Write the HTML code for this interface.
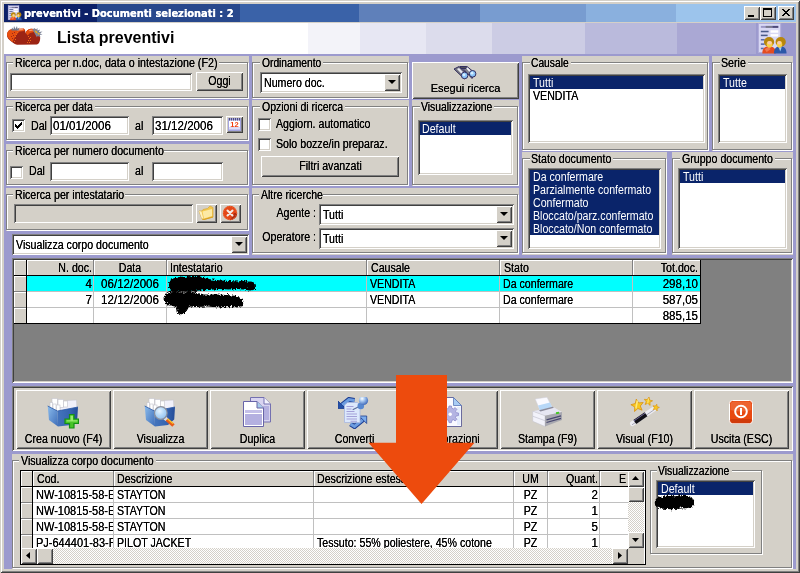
<!DOCTYPE html>
<html lang="it">
<head>
<meta charset="utf-8">
<title>preventivi - Documenti selezionati : 2</title>
<style>
html,body{margin:0;padding:0;}
body{width:800px;height:573px;overflow:hidden;background:#d4d0c8;position:relative;
 font-family:"Liberation Sans",sans-serif;font-size:12.5px;color:#000;line-height:14px;}
*{box-sizing:border-box;}
.a{position:absolute;}
.t{text-shadow:0 0 0 currentColor;position:absolute;white-space:nowrap;line-height:14px;height:14px;transform:scaleX(.85);transform-origin:0 0;}
.t.r{transform-origin:100% 0;text-align:right;}
.t.c{transform-origin:50% 0;text-align:center;}
.t.n{transform:scaleX(.925);}
.w{color:#fff;}
.t.w{text-shadow:none;}
#frame{left:0;top:0;width:800px;height:573px;background:#d4d0c8;
 box-shadow:inset 1px 1px 0 #d4d0c8,inset -1px -1px 0 #404040,inset 2px 2px 0 #fff,inset -2px -2px 0 #808080;}
#client{left:4px;top:22px;width:792px;height:547px;background:#9c9ace;}
.p{position:absolute;background:#d4d0c8;}
.gb{position:absolute;border:1px solid #808080;box-shadow:1px 1px 0 #fff,inset 1px 1px 0 #fff;}
.gl{position:absolute;background:#d4d0c8;height:13px;}
.s{position:absolute;background:#fff;
 box-shadow:inset 1px 1px 0 #808080,inset -1px -1px 0 #fff,inset 2px 2px 0 #404040,inset -2px -2px 0 #d4d0c8;}
.s.g{background:#d4d0c8;}
.b{position:absolute;background:#d4d0c8;
 box-shadow:inset 1px 1px 0 #fff,inset -1px -1px 0 #404040,inset 2px 2px 0 #d4d0c8,inset -2px -2px 0 #808080;}
.sel{position:absolute;background:#0a246a;}
.arr{position:absolute;width:0;height:0;border-left:4px solid transparent;border-right:4px solid transparent;border-top:4px solid #000;}
.hc{position:absolute;background:#d4d0c8;box-shadow:inset 1px 1px 0 #fff,inset -1px -1px 0 #404040;}
.cell{position:absolute;background:#fff;}
</style>
</head>
<body>
<div id="root" style="position:absolute;left:0;top:0;width:800px;height:573px;opacity:.999">
<div id="frame" class="a"></div>
<div class="a" style="left:4px;top:4px;width:792px;height:18px;background:#0c2068"></div>
<div class="a" style="left:97px;top:4px;width:143px;height:18px;background:#28488c"></div>
<div class="a" style="left:240px;top:4px;width:119px;height:18px;background:#3a62a8"></div>
<div class="a" style="left:359px;top:4px;width:121px;height:18px;background:#5f80ba"></div>
<div class="a" style="left:480px;top:4px;width:106px;height:18px;background:#789cd0"></div>
<div class="a" style="left:586px;top:4px;width:90px;height:18px;background:#8ab0de"></div>
<div class="a" style="left:676px;top:4px;width:120px;height:18px;background:#9cc4ec"></div>
<div class="a w" style="left:24px;top:7px;text-shadow:0 0 0 #fff;white-space:nowrap;font:bold 11px/13px 'DejaVu Sans Condensed','DejaVu Sans',sans-serif">preventivi - Documenti selezionati : 2</div>
<div id="client" class="a"></div>
<div class="a" style="left:4px;top:22px;width:792px;height:1px;background:#d4d0c8"></div>
<div class="a" style="left:4px;top:23px;width:752px;height:31px;background:#fff"></div>
<div class="a" style="left:308px;top:23px;width:52px;height:31px;background:#f3f3f9"></div>
<div class="a" style="left:360px;top:23px;width:66px;height:31px;background:#e7e7f3"></div>
<div class="a" style="left:426px;top:23px;width:66px;height:31px;background:#dcdcec"></div>
<div class="a" style="left:492px;top:23px;width:93px;height:31px;background:#cccce4"></div>
<div class="a" style="left:585px;top:23px;width:92px;height:31px;background:#babadc"></div>
<div class="a" style="left:677px;top:23px;width:79px;height:31px;background:#aaa8d4"></div>
<div class="a" style="left:57px;top:29px;white-space:nowrap;font:bold 16px/18px 'Liberation Sans',sans-serif">Lista preventivi</div>
<div class="p" style="left:6px;top:56px;width:243px;height:43px"></div>
<div class="gb" style="left:6px;top:62px;width:242px;height:36px"></div>
<div class="gl" style="left:13px;top:56px;width:206px"></div>
<div class="t " style="left:15px;top:56px;transform:scaleX(0.857);">Ricerca per n.doc, data o intestazione (F2)</div>
<div class="s " style="left:10px;top:73px;width:182px;height:18px"></div>
<div class="b"  style="left:196px;top:72px;width:47px;height:19px"></div>
<div class="t c" style="left:196px;top:74px;width:47px;">O<u>g</u>gi</div>
<div class="p" style="left:6px;top:100px;width:243px;height:41px"></div>
<div class="gb" style="left:6px;top:106px;width:242px;height:34px"></div>
<div class="gl" style="left:13px;top:100px;width:82px"></div>
<div class="t " style="left:15px;top:100px;">Ricerca per data</div>
<div class="s" style="left:12px;top:119px;width:13px;height:13px"><svg class="a" style="left:3px;top:3px" width="7" height="7" viewBox="0 0 7 7"><path d="M0 2v3l2 2l5-5v-3l-5 5z" fill="#000" shape-rendering="crispEdges"/></svg></div>
<div class="t " style="left:31px;top:119px;">Dal</div>
<div class="s " style="left:50px;top:116px;width:79px;height:19px"></div>
<div class="t n" style="left:53px;top:119px;">01/01/2006</div>
<div class="t " style="left:135px;top:119px;">al</div>
<div class="s " style="left:152px;top:116px;width:71px;height:19px"></div>
<div class="t n" style="left:155px;top:119px;">31/12/2006</div>
<div class="b" id=calbtn style="left:226px;top:116px;width:17px;height:17px"></div>
<div class="p" style="left:6px;top:144px;width:243px;height:42px"></div>
<div class="gb" style="left:6px;top:150px;width:242px;height:35px"></div>
<div class="gl" style="left:13px;top:144px;width:151px"></div>
<div class="t " style="left:15px;top:144px;">Ricerca per numero documento</div>
<div class="s" style="left:10px;top:166px;width:13px;height:13px"></div>
<div class="t " style="left:29px;top:164px;">Dal</div>
<div class="s " style="left:50px;top:162px;width:79px;height:19px"></div>
<div class="t " style="left:135px;top:164px;">al</div>
<div class="s " style="left:152px;top:162px;width:71px;height:19px"></div>
<div class="p" style="left:6px;top:188px;width:243px;height:43px"></div>
<div class="gb" style="left:6px;top:194px;width:242px;height:36px"></div>
<div class="gl" style="left:13px;top:188px;width:112px"></div>
<div class="t " style="left:15px;top:188px;">Ricerca per intestatario</div>
<div class="s g" style="left:14px;top:204px;width:179px;height:19px"></div>
<div class="b" id=foldbtn style="left:196px;top:204px;width:21px;height:19px"></div>
<div class="b" id=delbtn style="left:220px;top:204px;width:21px;height:19px"></div>
<div class="s " style="left:12px;top:234px;width:237px;height:21px"></div>
<div class="t " style="left:16px;top:238px;">Visualizza corpo documento</div>
<div class="b"  style="left:231px;top:236px;width:16px;height:17px"><div class="arr" style="left:4px;top:6px"></div></div>
<div class="p" style="left:252px;top:56px;width:157px;height:43px"></div>
<div class="gb" style="left:252px;top:62px;width:156px;height:36px"></div>
<div class="gl" style="left:260px;top:56px;width:63px"></div>
<div class="t " style="left:262px;top:56px;transform:scaleX(0.82);">Ordinamento</div>
<div class="s " style="left:260px;top:72px;width:142px;height:21px"></div>
<div class="t " style="left:264px;top:76px;">Numero doc.</div>
<div class="b"  style="left:384px;top:74px;width:16px;height:17px"><div class="arr" style="left:4px;top:6px"></div></div>
<div class="p" style="left:252px;top:100px;width:157px;height:86px"></div>
<div class="gb" style="left:252px;top:106px;width:156px;height:79px"></div>
<div class="gl" style="left:260px;top:100px;width:85px"></div>
<div class="t " style="left:262px;top:100px;transform:scaleX(0.84);">Opzioni di ricerca</div>
<div class="s" style="left:258px;top:118px;width:13px;height:13px"></div>
<div class="t " style="left:276px;top:117px;">Aggiorn. automatico</div>
<div class="s" style="left:258px;top:138px;width:13px;height:13px"></div>
<div class="t " style="left:276px;top:137px;">Solo bozze/in preparaz.</div>
<div class="b"  style="left:261px;top:156px;width:138px;height:21px"></div>
<div class="t c" style="left:261px;top:159px;width:139px;">Filtri avanzati</div>
<div class="b" id=esegui style="left:412px;top:62px;width:107px;height:37px"></div>
<div class="a" style="left:412px;top:82px;width:107px;text-align:center;white-space:nowrap;text-shadow:0 0 0 #000;font:11px/13px 'Liberation Sans',sans-serif">Esegui ricerca</div>
<div class="p" style="left:412px;top:100px;width:107px;height:86px"></div>
<div class="gb" style="left:412px;top:106px;width:106px;height:79px"></div>
<div class="gl" style="left:420px;top:100px;width:74px"></div>
<div class="t " style="left:421px;top:100px;transform:scaleX(0.83);">Visualizzazione</div>
<div class="s " style="left:418px;top:120px;width:95px;height:55px"></div>
<div class="sel" style="left:420px;top:122px;width:91px;height:13px"></div>
<div class="t w" style="left:422px;top:122px;">Default</div>
<div class="p" style="left:252px;top:188px;width:267px;height:67px"></div>
<div class="gb" style="left:252px;top:194px;width:266px;height:59px"></div>
<div class="gl" style="left:259px;top:188px;width:64px"></div>
<div class="t " style="left:261px;top:188px;transform:scaleX(0.84);">Altre ricerche</div>
<div class="t r" style="left:236px;top:206px;width:80px;">Agente :</div>
<div class="s " style="left:319px;top:204px;width:195px;height:21px"></div>
<div class="t " style="left:323px;top:208px;">Tutti</div>
<div class="b"  style="left:496px;top:206px;width:16px;height:17px"><div class="arr" style="left:4px;top:6px"></div></div>
<div class="t r" style="left:236px;top:230px;width:80px;">Operatore :</div>
<div class="s " style="left:319px;top:228px;width:195px;height:21px"></div>
<div class="t " style="left:323px;top:232px;">Tutti</div>
<div class="b"  style="left:496px;top:230px;width:16px;height:17px"><div class="arr" style="left:4px;top:6px"></div></div>
<div class="p" style="left:522px;top:56px;width:187px;height:95px"></div>
<div class="gb" style="left:522px;top:62px;width:186px;height:88px"></div>
<div class="gl" style="left:530px;top:56px;width:41px"></div>
<div class="t " style="left:531px;top:56px;transform:scaleX(0.82);">Causale</div>
<div class="s " style="left:528px;top:74px;width:177px;height:69px"></div>
<div class="sel" style="left:530px;top:76px;width:173px;height:13px"></div>
<div class="t w" style="left:533px;top:76px;">Tutti</div>
<div class="t " style="left:533px;top:89px;">VENDITA</div>
<div class="p" style="left:712px;top:56px;width:81px;height:95px"></div>
<div class="gb" style="left:712px;top:62px;width:80px;height:88px"></div>
<div class="gl" style="left:720px;top:56px;width:28px"></div>
<div class="t " style="left:721px;top:56px;">Serie</div>
<div class="s " style="left:718px;top:74px;width:69px;height:69px"></div>
<div class="sel" style="left:720px;top:76px;width:65px;height:13px"></div>
<div class="t w" style="left:723px;top:76px;">Tutte</div>
<div class="p" style="left:522px;top:152px;width:145px;height:103px"></div>
<div class="gb" style="left:522px;top:158px;width:144px;height:95px"></div>
<div class="gl" style="left:530px;top:152px;width:83px"></div>
<div class="t " style="left:531px;top:152px;">Stato documento</div>
<div class="s " style="left:528px;top:168px;width:133px;height:81px"></div>
<div class="sel" style="left:530px;top:170px;width:129px;height:65px"></div>
<div class="t w" style="left:533px;top:170px;">Da confermare</div>
<div class="t w" style="left:533px;top:183px;">Parzialmente confermato</div>
<div class="t w" style="left:533px;top:196px;">Confermato</div>
<div class="t w" style="left:533px;top:209px;">Bloccato/parz.confermato</div>
<div class="t w" style="left:533px;top:222px;">Bloccato/Non confermato</div>
<div class="p" style="left:672px;top:152px;width:121px;height:103px"></div>
<div class="gb" style="left:672px;top:158px;width:120px;height:95px"></div>
<div class="gl" style="left:680px;top:152px;width:95px"></div>
<div class="t " style="left:682px;top:152px;">Gruppo documento</div>
<div class="s " style="left:678px;top:168px;width:109px;height:81px"></div>
<div class="sel" style="left:680px;top:170px;width:105px;height:13px"></div>
<div class="t w" style="left:683px;top:170px;">Tutti</div>
<div class="s" style="left:12px;top:258px;width:781px;height:125px;background:#808080"></div>
<div class="a" style="left:14px;top:260px;width:686px;height:15px;background:#d4d0c8"></div>
<div class="a" style="left:14px;top:260px;width:686px;height:1px;background:#fff"></div>
<div class="a" style="left:14px;top:276px;width:12px;height:47px;background:#d4d0c8"></div>
<div class="a" style="left:27px;top:276px;width:673px;height:15px;background:#00ffff"></div>
<div class="a" style="left:27px;top:292px;width:673px;height:31px;background:#fff"></div>
<div class="a" style="left:27px;top:291px;width:673px;height:1px;background:#c0c0c0"></div>
<div class="a" style="left:27px;top:307px;width:673px;height:1px;background:#c0c0c0"></div>
<div class="a" style="left:93px;top:276px;width:1px;height:47px;background:#c0c0c0"></div>
<div class="a" style="left:93px;top:260px;width:1px;height:15px;background:#808080"></div>
<div class="a" style="left:94px;top:261px;width:1px;height:14px;background:#fff"></div>
<div class="a" style="left:166px;top:276px;width:1px;height:47px;background:#c0c0c0"></div>
<div class="a" style="left:166px;top:260px;width:1px;height:15px;background:#808080"></div>
<div class="a" style="left:167px;top:261px;width:1px;height:14px;background:#fff"></div>
<div class="a" style="left:366px;top:276px;width:1px;height:47px;background:#c0c0c0"></div>
<div class="a" style="left:366px;top:260px;width:1px;height:15px;background:#808080"></div>
<div class="a" style="left:367px;top:261px;width:1px;height:14px;background:#fff"></div>
<div class="a" style="left:499px;top:276px;width:1px;height:47px;background:#c0c0c0"></div>
<div class="a" style="left:499px;top:260px;width:1px;height:15px;background:#808080"></div>
<div class="a" style="left:500px;top:261px;width:1px;height:14px;background:#fff"></div>
<div class="a" style="left:632px;top:276px;width:1px;height:47px;background:#c0c0c0"></div>
<div class="a" style="left:632px;top:260px;width:1px;height:15px;background:#808080"></div>
<div class="a" style="left:633px;top:261px;width:1px;height:14px;background:#fff"></div>
<div class="a" style="left:14px;top:261px;width:1px;height:14px;background:#fff"></div>
<div class="a" style="left:27px;top:261px;width:1px;height:14px;background:#fff"></div>
<div class="a" style="left:14px;top:276px;width:12px;height:1px;background:#fff"></div>
<div class="a" style="left:14px;top:276px;width:1px;height:15px;background:#fff"></div>
<div class="a" style="left:14px;top:292px;width:12px;height:1px;background:#fff"></div>
<div class="a" style="left:14px;top:292px;width:1px;height:15px;background:#fff"></div>
<div class="a" style="left:14px;top:308px;width:12px;height:1px;background:#fff"></div>
<div class="a" style="left:14px;top:308px;width:1px;height:15px;background:#fff"></div>
<div class="a" style="left:14px;top:291px;width:12px;height:1px;background:#808080"></div>
<div class="a" style="left:14px;top:307px;width:12px;height:1px;background:#808080"></div>
<div class="a" style="left:14px;top:275px;width:687px;height:1px;background:#000"></div>
<div class="a" style="left:14px;top:323px;width:687px;height:1px;background:#000"></div>
<div class="a" style="left:26px;top:260px;width:1px;height:64px;background:#000"></div>
<div class="a" style="left:700px;top:260px;width:1px;height:64px;background:#000"></div>
<div class="t r" style="left:27px;top:261px;width:65px;">N. doc.</div>
<div class="t c" style="left:94px;top:261px;width:72px;">Data</div>
<div class="t " style="left:170px;top:261px;">Intestatario</div>
<div class="t " style="left:371px;top:261px;">Causale</div>
<div class="t " style="left:504px;top:261px;">Stato</div>
<div class="t r" style="left:633px;top:261px;width:65px;">Tot.doc.</div>
<div class="t r n" style="left:27px;top:277px;width:65px;">4</div>
<div class="t c n" style="left:94px;top:277px;width:72px;">06/12/2006</div>
<div class="t " style="left:370px;top:277px;">VENDITA</div>
<div class="t " style="left:503px;top:277px;">Da confermare</div>
<div class="t r n" style="left:633px;top:277px;width:65px;">298,10</div>
<div class="t r n" style="left:27px;top:293px;width:65px;">7</div>
<div class="t c n" style="left:94px;top:293px;width:72px;">12/12/2006</div>
<div class="t " style="left:370px;top:293px;">VENDITA</div>
<div class="t " style="left:503px;top:293px;">Da confermare</div>
<div class="t r n" style="left:633px;top:293px;width:65px;">587,05</div>
<div class="t r n" style="left:633px;top:309px;width:65px;">885,15</div>
<div class="s" style="left:12px;top:386px;width:781px;height:65px;background:#d4d0c8"></div>
<div class="b" id=tb0 style="left:16px;top:390px;width:95px;height:59px"></div>
<div class="t c" style="left:16px;top:432px;width:95px;">Crea nuovo (F4)</div>
<div class="b" id=tb1 style="left:113px;top:390px;width:95px;height:59px"></div>
<div class="t c" style="left:113px;top:432px;width:95px;">Visualizza</div>
<div class="b" id=tb2 style="left:210px;top:390px;width:95px;height:59px"></div>
<div class="t c" style="left:210px;top:432px;width:95px;">Duplica</div>
<div class="b" id=tb3 style="left:307px;top:390px;width:95px;height:59px"></div>
<div class="t c" style="left:307px;top:432px;width:95px;">Converti</div>
<div class="b" id=tb4 style="left:403px;top:390px;width:95px;height:59px"></div>
<div class="t c" style="left:403px;top:432px;width:95px;">Elaborazioni</div>
<div class="b" id=tb5 style="left:500px;top:390px;width:95px;height:59px"></div>
<div class="t c" style="left:500px;top:432px;width:95px;">Stampa (F9)</div>
<div class="b" id=tb6 style="left:597px;top:390px;width:95px;height:59px"></div>
<div class="t c" style="left:597px;top:432px;width:95px;">Visual (F10)</div>
<div class="b" id=tb7 style="left:694px;top:390px;width:95px;height:59px"></div>
<div class="t c" style="left:694px;top:432px;width:95px;">Uscita (ESC)</div>
<div class="p" style="left:12px;top:454px;width:781px;height:115px"></div>
<div class="gb" style="left:12px;top:460px;width:780px;height:108px"></div>
<div class="gl" style="left:19px;top:454px;width:137px"></div>
<div class="t " style="left:21px;top:454px;">Visualizza corpo documento</div>
<div class="a" style="left:-1px;top:-1px;width:0;height:0">
<div class="a" style="left:21px;top:471px;width:626px;height:95px;background:#fff;border:1px solid #000"></div>
<div class="a" style="left:22px;top:472px;width:607px;height:15px;background:#d4d0c8"></div>
<div class="a" style="left:22px;top:472px;width:607px;height:1px;background:#fff"></div>
<div class="a" style="left:22px;top:488px;width:11px;height:61px;background:#d4d0c8"></div>
<div class="a" style="left:34px;top:503px;width:595px;height:1px;background:#c0c0c0"></div>
<div class="a" style="left:34px;top:519px;width:595px;height:1px;background:#c0c0c0"></div>
<div class="a" style="left:34px;top:535px;width:595px;height:1px;background:#c0c0c0"></div>
<div class="a" style="left:114px;top:488px;width:1px;height:61px;background:#c0c0c0"></div>
<div class="a" style="left:114px;top:472px;width:1px;height:15px;background:#808080"></div>
<div class="a" style="left:115px;top:473px;width:1px;height:14px;background:#fff"></div>
<div class="a" style="left:314px;top:488px;width:1px;height:61px;background:#c0c0c0"></div>
<div class="a" style="left:314px;top:472px;width:1px;height:15px;background:#808080"></div>
<div class="a" style="left:315px;top:473px;width:1px;height:14px;background:#fff"></div>
<div class="a" style="left:514px;top:488px;width:1px;height:61px;background:#c0c0c0"></div>
<div class="a" style="left:514px;top:472px;width:1px;height:15px;background:#808080"></div>
<div class="a" style="left:515px;top:473px;width:1px;height:14px;background:#fff"></div>
<div class="a" style="left:548px;top:488px;width:1px;height:61px;background:#c0c0c0"></div>
<div class="a" style="left:548px;top:472px;width:1px;height:15px;background:#808080"></div>
<div class="a" style="left:549px;top:473px;width:1px;height:14px;background:#fff"></div>
<div class="a" style="left:600px;top:488px;width:1px;height:61px;background:#c0c0c0"></div>
<div class="a" style="left:600px;top:472px;width:1px;height:15px;background:#808080"></div>
<div class="a" style="left:601px;top:473px;width:1px;height:14px;background:#fff"></div>
<div class="a" style="left:22px;top:473px;width:1px;height:14px;background:#fff"></div>
<div class="a" style="left:34px;top:473px;width:1px;height:14px;background:#fff"></div>
<div class="a" style="left:22px;top:488px;width:11px;height:1px;background:#fff"></div>
<div class="a" style="left:22px;top:488px;width:1px;height:15px;background:#fff"></div>
<div class="a" style="left:22px;top:504px;width:11px;height:1px;background:#fff"></div>
<div class="a" style="left:22px;top:504px;width:1px;height:15px;background:#fff"></div>
<div class="a" style="left:22px;top:520px;width:11px;height:1px;background:#fff"></div>
<div class="a" style="left:22px;top:520px;width:1px;height:15px;background:#fff"></div>
<div class="a" style="left:22px;top:536px;width:11px;height:1px;background:#fff"></div>
<div class="a" style="left:22px;top:536px;width:1px;height:13px;background:#fff"></div>
<div class="a" style="left:22px;top:503px;width:11px;height:1px;background:#808080"></div>
<div class="a" style="left:22px;top:519px;width:11px;height:1px;background:#808080"></div>
<div class="a" style="left:22px;top:535px;width:11px;height:1px;background:#808080"></div>
<div class="a" style="left:22px;top:487px;width:607px;height:1px;background:#000"></div>
<div class="a" style="left:33px;top:472px;width:1px;height:77px;background:#000"></div>
<div class="t " style="left:38px;top:473px;">Cod.</div>
<div class="t " style="left:118px;top:473px;">Descrizione</div>
<div class="t " style="left:318px;top:473px;">Descrizione estesa</div>
<div class="t c" style="left:515px;top:473px;width:33px;">UM</div>
<div class="t r" style="left:549px;top:473px;width:50px;">Quant.</div>
<div class="t r" style="left:601px;top:473px;width:26px;">E</div>
<div class="a" style="left:34px;top:489px;width:595px;height:14px;overflow:hidden">
<div class="a" style="left:0;top:0;width:80px;height:14px;overflow:hidden"><div class="t" style="left:3px;top:0;transform:scaleX(.88)">NW-10815-58-E</div></div>
<div class="t" style="left:84px;top:0">STAYTON</div>
<div class="t c" style="left:481px;top:0;width:33px">PZ</div>
<div class="t r n" style="left:515px;top:0;width:50px">2</div>
</div>
<div class="a" style="left:34px;top:505px;width:595px;height:14px;overflow:hidden">
<div class="a" style="left:0;top:0;width:80px;height:14px;overflow:hidden"><div class="t" style="left:3px;top:0;transform:scaleX(.88)">NW-10815-58-E</div></div>
<div class="t" style="left:84px;top:0">STAYTON</div>
<div class="t c" style="left:481px;top:0;width:33px">PZ</div>
<div class="t r n" style="left:515px;top:0;width:50px">1</div>
</div>
<div class="a" style="left:34px;top:521px;width:595px;height:14px;overflow:hidden">
<div class="a" style="left:0;top:0;width:80px;height:14px;overflow:hidden"><div class="t" style="left:3px;top:0;transform:scaleX(.88)">NW-10815-58-E</div></div>
<div class="t" style="left:84px;top:0">STAYTON</div>
<div class="t c" style="left:481px;top:0;width:33px">PZ</div>
<div class="t r n" style="left:515px;top:0;width:50px">5</div>
</div>
<div class="a" style="left:34px;top:537px;width:595px;height:12px;overflow:hidden">
<div class="a" style="left:0;top:0;width:80px;height:12px;overflow:hidden"><div class="t" style="left:3px;top:0;transform:scaleX(.88)">PJ-644401-83-F</div></div>
<div class="t" style="left:84px;top:0">PILOT JACKET</div>
<div class="t" style="left:284px;top:0">Tessuto: 55% poliestere, 45% cotone</div>
<div class="t c" style="left:481px;top:0;width:33px">PZ</div>
<div class="t r n" style="left:515px;top:0;width:50px">1</div>
</div>
<div class="a" style="left:22px;top:549px;width:607px;height:16px;background-color:#fff;background-image:linear-gradient(45deg,#d4d0c8 25%,transparent 25%,transparent 75%,#d4d0c8 75%),linear-gradient(45deg,#d4d0c8 25%,transparent 25%,transparent 75%,#d4d0c8 75%);background-size:2px 2px;background-position:0 0,1px 1px;"></div>
<div class="a" style="left:629px;top:472px;width:16px;height:77px;background-color:#fff;background-image:linear-gradient(45deg,#d4d0c8 25%,transparent 25%,transparent 75%,#d4d0c8 75%),linear-gradient(45deg,#d4d0c8 25%,transparent 25%,transparent 75%,#d4d0c8 75%);background-size:2px 2px;background-position:0 0,1px 1px;"></div>
<div class="a" style="left:629px;top:549px;width:16px;height:16px;background:#d4d0c8"></div>
<div class="b"  style="left:22px;top:549px;width:16px;height:16px"><svg class="a" style="left:5px;top:4px" width="4" height="7"><path d="M4 0v7l-4-3.5z" fill="#000"/></svg></div>
<div class="b"  style="left:38px;top:549px;width:16px;height:16px"></div>
<div class="b"  style="left:613px;top:549px;width:16px;height:16px"><svg class="a" style="left:6px;top:4px" width="4" height="7"><path d="M0 0v7l4-3.5z" fill="#000"/></svg></div>
<div class="b"  style="left:629px;top:472px;width:16px;height:16px"><svg class="a" style="left:4px;top:5px" width="7" height="4"><path d="M0 4h7l-3.5-4z" fill="#000"/></svg></div>
<div class="b"  style="left:629px;top:488px;width:16px;height:15px"></div>
<div class="b"  style="left:629px;top:533px;width:16px;height:16px"><svg class="a" style="left:4px;top:6px" width="7" height="4"><path d="M0 0h7l-3.5 4z" fill="#000"/></svg></div>
</div>
<div class="gb" style="left:650px;top:470px;width:112px;height:84px"></div>
<div class="gl" style="left:657px;top:464px;width:75px"></div>
<div class="t " style="left:658px;top:464px;transform:scaleX(0.83);">Visualizzazione</div>
<div class="s " style="left:656px;top:480px;width:99px;height:68px"></div>
<div class="sel" style="left:658px;top:482px;width:95px;height:13px"></div>
<div class="t w" style="left:661px;top:482px;">Default</div>
<div class="b"  style="left:744px;top:6px;width:16px;height:14px"><svg class="a" style="left:0;top:0" width="16" height="14"><rect x="4" y="9" width="6" height="2" fill="#000"/></svg></div>
<div class="b"  style="left:760px;top:6px;width:16px;height:14px"><svg class="a" style="left:0;top:0" width="16" height="14"><rect x="3.5" y="2.5" width="8" height="8" fill="none" stroke="#000"/><rect x="3" y="2" width="9" height="2" fill="#000"/></svg></div>
<div class="b"  style="left:778px;top:6px;width:16px;height:14px"><svg class="a" style="left:0;top:0" width="16" height="14"><path d="M4 3l7 7M5 3l7 7M11 3l-7 7M12 3l-7 7" stroke="#000" stroke-width="1" fill="none" shape-rendering="crispEdges"/></svg></div>
<svg class="a" style="left:7px;top:5px" width="15" height="16" viewBox="0 0 32 32"><rect x="2.500" y=".5" width="23" height="30" fill="#d8d8f4" stroke="#b0acd8"/><rect x="5" y="3" width="18" height="2" fill="#9a96c4"/><rect x="10" y="3" width="7" height="2" fill="#78788c"/><rect x="17" y="3" width="6" height="2" fill="#4e4a7a"/><rect x="5" y="8" width="8" height="1.600" fill="#4a5a8a"/><rect x="15" y="7.500" width="8" height="2.500" fill="#fff"/><rect x="5" y="12" width="7" height="1.600" fill="#4a5a8a"/><rect x="15" y="11.500" width="8" height="2.500" fill="#fff"/><rect x="5" y="16.500" width="4" height="1.600" fill="#5a6aaa"/><rect x="5" y="21" width="4" height="1.600" fill="#5a6aaa"/><rect x="5" y="25.500" width="3" height="1.600" fill="#5a6aaa"/><path d="M6.500 31.500c0-5 2.500-7.500 7-7.500s7 2.500 7 7.500z" fill="#e44c20"/><path d="M9 27l4-2.500 2 2.500-4 3z" fill="#f07850"/><ellipse cx="13.500" cy="19.500" rx="5.300" ry="5" fill="#b8860c"/><ellipse cx="14" cy="22" rx="3" ry="3.500" fill="#f8d048"/><ellipse cx="14" cy="20.500" rx="2.300" ry="1.800" fill="#f8c8b0"/><path d="M18.500 31.500c0-5 2.500-7.500 6.500-7.500s6.500 2.500 6.500 7.500z" fill="#2c58a8"/><path d="M23.500 25l1.500 4.500 1.500-4.500z" fill="#a8d0f0"/><ellipse cx="25.500" cy="19.500" rx="5.300" ry="5" fill="#b8860c"/><ellipse cx="24.300" cy="22" rx="2.800" ry="3.500" fill="#f8d048"/><ellipse cx="24" cy="20.500" rx="2" ry="1.800" fill="#f8c8b0"/></svg>
<svg class="a" style="left:756px;top:23px" width="31" height="31" viewBox="0 0 32 32"><rect x="2.500" y=".5" width="23" height="30" fill="#d8d8f4" stroke="#b0acd8"/><rect x="5" y="3" width="18" height="2" fill="#9a96c4"/><rect x="10" y="3" width="7" height="2" fill="#78788c"/><rect x="17" y="3" width="6" height="2" fill="#4e4a7a"/><rect x="5" y="8" width="8" height="1.600" fill="#4a5a8a"/><rect x="15" y="7.500" width="8" height="2.500" fill="#fff"/><rect x="5" y="12" width="7" height="1.600" fill="#4a5a8a"/><rect x="15" y="11.500" width="8" height="2.500" fill="#fff"/><rect x="5" y="16.500" width="4" height="1.600" fill="#5a6aaa"/><rect x="5" y="21" width="4" height="1.600" fill="#5a6aaa"/><rect x="5" y="25.500" width="3" height="1.600" fill="#5a6aaa"/><path d="M6.500 31.500c0-5 2.500-7.500 7-7.500s7 2.500 7 7.500z" fill="#e44c20"/><path d="M9 27l4-2.500 2 2.500-4 3z" fill="#f07850"/><ellipse cx="13.500" cy="19.500" rx="5.300" ry="5" fill="#b8860c"/><ellipse cx="14" cy="22" rx="3" ry="3.500" fill="#f8d048"/><ellipse cx="14" cy="20.500" rx="2.300" ry="1.800" fill="#f8c8b0"/><path d="M18.500 31.500c0-5 2.500-7.500 6.500-7.500s6.500 2.500 6.500 7.500z" fill="#2c58a8"/><path d="M23.500 25l1.500 4.500 1.500-4.500z" fill="#a8d0f0"/><ellipse cx="25.500" cy="19.500" rx="5.300" ry="5" fill="#b8860c"/><ellipse cx="24.300" cy="22" rx="2.800" ry="3.500" fill="#f8d048"/><ellipse cx="24" cy="20.500" rx="2" ry="1.800" fill="#f8c8b0"/></svg>
<svg class="a" style="left:4px;top:23px" width="44" height="26" viewBox="0 0 44 26"><g transform="translate(-4,-23)"><path d="M7 35C7 31.500 9 29.500 12 29.200L24 28.800C25.500 30 25.500 32 25.300 33.500C26 31 28 29 31 28.700L35 29C38 30.500 40.200 34 40.200 38C40.200 41 39 44 37 44.600L17 44.800C14 44 11 41.500 9 39.500C7.500 38 7 36.500 7 35Z" fill="#9c2414"/><path d="M7 35C7 31.500 9 29.500 12 29.200L24 28.600L24.500 31L19.500 31.500L16 35L14 39L12.500 42C10.500 40.500 8 38.500 7 35Z" fill="#e8500f"/><path d="M16 29l6-.5 1.500 1.500-6 .8z" fill="#f89870"/><path d="M25.800 33C26.500 30.500 28.500 29 31 28.700L35 29.200L34 32L30 33L27.500 35.500Z" fill="#e8500f"/><path d="M29 30l3.500-.5.500 1-3.500.8z" fill="#f89870"/><path d="M11.500 30.500l.5-3 1.500 2 .5-3.500 1.500 3 1.500-3 .5 3 2-1.500-1 3z" fill="#70788c"/><path d="M32.500 29.500l2.500-1.500.5 2 2-2 0 2.500 2.500-1-1 2.500 3.500-.5-2.500 2 2.500 1-3 .5 1 2-3-1-.5 1.500-2-3.500z" fill="#7c8498"/><path d="M34.500 30.500l2 .5 1.500 2.500-2-.5z" fill="#e8b020"/><rect x="38" y="33" width="1.500" height="1.500" fill="#e8b020"/><g fill="#a02818"><rect x="12" y="33" width="1" height="1"/><rect x="13" y="35" width="1" height="1"/><rect x="11" y="36" width="1" height="1"/><rect x="14" y="32" width="1" height="1"/><rect x="12" y="38" width="1" height="1"/></g><g fill="#f06818"><rect x="15" y="36" width="1" height="1"/><rect x="16" y="34" width="1" height="1"/><rect x="17" y="32" width="1" height="1"/><rect x="15" y="39" width="1" height="1"/><rect x="14" y="41" width="1" height="1"/><rect x="28" y="36" width="1" height="1"/><rect x="29" y="38" width="1" height="1"/><rect x="30" y="40" width="1" height="1"/><rect x="28" y="40" width="1" height="1"/><rect x="30" y="37" width="1" height="1"/><rect x="27" y="42" width="1" height="1"/><rect x="29" y="42" width="1" height="1"/></g></g></svg>
<svg class="a" style="left:228px;top:118px" width="13" height="13" viewBox="0 0 13 13"><rect x="0" y="0" width="13" height="13" fill="#a4a4e0"/><rect x="1" y="2.5" width="11" height="7" fill="#fff"/><path d="M1.5 0v2.500M3.500 0v2.500M5.500 0v2.500M7.500 0v2.500M9.500 0v2.500M11.500 0v2.500" stroke="#505078" stroke-width="1"/><rect x="1" y="9.500" width="11" height="2" fill="#e0e0f8"/><text x="6.500" y="9" font-family="Liberation Sans,sans-serif" font-weight="bold" font-size="7.500" fill="#f04010" text-anchor="middle">12</text></svg>
<svg class="a" style="left:198px;top:205px" width="17" height="16" viewBox="0 0 17 16"><path d="M1 6l3 8 2 .5 9-2.500V2.500L12 1 9.500 3.500 5 4.500 4 6z" fill="#f4c84c" stroke="#d8a838" stroke-width=".7"/><path d="M4.500 6.500l9.500-2.500v7l-8 2.500z" fill="#fce9a4"/><path d="M1 6l3 8 1.500.3L3.500 6.500z" fill="#fdf0c0"/><path d="M4 14l2 .5 9-2.500" stroke="#d8a020" stroke-width="1" fill="none"/></svg>
<svg class="a" style="left:222px;top:205px" width="16" height="16" viewBox="0 0 16 16"><circle cx="8" cy="8" r="7.200" fill="#e44818"/><path d="M8 15.200a7.200 7.200 0 0 0 7.200-7.200h-3z" fill="#b02c10"/><circle cx="8" cy="8" r="6.500" fill="none" stroke="#f47848" stroke-width=".8" stroke-dasharray="1 1"/><path d="M5.500 5.500l5 5M10.500 5.500l-5 5" stroke="#f4ece8" stroke-width="2" stroke-linecap="round"/></svg>
<svg class="a" style="left:452px;top:64px" width="26" height="17" viewBox="0 0 26 17"><g stroke="#343060" stroke-width="1"><path d="M2 5l5-2.500 8 7.500-2.500 5z" fill="#74747f"/><path d="M10 3.500l5-1 8 6.500-3 5.500z" fill="#84848f"/><path d="M8 2.500h6l1 2h-6z" fill="#505058"/></g><path d="M5 5l2-1 6 6-1.500 2z" fill="#e8e8f0"/><path d="M14 4l1.500-.5 5.500 5-1.500 2z" fill="#f4f4f8"/><circle cx="12.600" cy="11.400" r="3.300" fill="#8cc4f8" stroke="#343060"/><circle cx="20.600" cy="9.800" r="3.300" fill="#8cc4f8" stroke="#343060"/><circle cx="12" cy="10.800" r="1.400" fill="#d8f0ff"/><circle cx="20" cy="9.200" r="1.400" fill="#d8f0ff"/></svg>
<svg width="0" height="0" style="position:absolute"><defs><linearGradient id="gL" x1="0" y1="0" x2="1" y2="1"><stop offset="0" stop-color="#8cbcec"/><stop offset="1" stop-color="#3c6cb8"/></linearGradient><linearGradient id="gF" x1="0" y1="0" x2="1" y2="0"><stop offset="0" stop-color="#4474bc"/><stop offset=".6" stop-color="#3564b0"/><stop offset="1" stop-color="#244c98"/></linearGradient><radialGradient id="gLens" cx=".4" cy=".35" r=".7"><stop offset="0" stop-color="#e8f4ff"/><stop offset=".5" stop-color="#b4d8f8"/><stop offset="1" stop-color="#90c0f0"/></radialGradient></defs></svg>
<svg class="a" style="left:47px;top:397px" width="32" height="32" viewBox="0 0 32 32"><g fill="#fff" stroke="#c4c4cc" stroke-width=".6"><path d="M20 3.500l9.500-.5 .5 9-17 2v-5h5z" fill="#f0f0fa"/><rect x="5" y="1.500" width="5.500" height="9"/><rect x="11" y="2.300" width="5.500" height="8"/><rect x="16.500" y="4" width="4" height="6"/><rect x="3" y="5.500" width="2.500" height="8"/><rect x="6" y="7" width="3" height="7"/><rect x="9.500" y="8" width="3.500" height="7"/></g><path d="M.7 9l9.800 5 .5 15.500-9-6.500z" fill="url(#gL)"/><path d="M10.500 14l20.500-4-.8 12.500-6.200 5.500-13 1.500z" fill="url(#gF)"/><path d="M.7 9l9.800 5 20.500-4" fill="none" stroke="#2c58a4" stroke-width=".8"/><path d="M22.500 17.500h4.500v4.500h4.500v4.500h-4.500v4.500h-4.500v-4.500h-4.500v-4.500h4.500z" fill="#48c428" stroke="#149014" stroke-width="1.200"/><path d="M23.500 18.700h2.500v4.500h4.500v1.200h-11v-1.200h4z" fill="#98ec70"/></svg>
<svg class="a" style="left:144px;top:397px" width="32" height="32" viewBox="0 0 32 32"><g fill="#fff" stroke="#c4c4cc" stroke-width=".6"><path d="M20 3.500l9.500-.5 .5 9-17 2v-5h5z" fill="#f0f0fa"/><rect x="5" y="1.500" width="5.500" height="9"/><rect x="11" y="2.300" width="5.500" height="8"/><rect x="16.500" y="4" width="4" height="6"/><rect x="3" y="5.500" width="2.500" height="8"/><rect x="6" y="7" width="3" height="7"/><rect x="9.500" y="8" width="3.500" height="7"/></g><path d="M.7 9l9.800 5 .5 15.500-9-6.500z" fill="url(#gL)"/><path d="M10.500 14l20.500-4-.8 12.500-6.200 5.500-13 1.500z" fill="url(#gF)"/><path d="M.7 9l9.800 5 20.500-4" fill="none" stroke="#2c58a4" stroke-width=".8"/><path d="M21.500 21.500l8 7" stroke="#e85c18" stroke-width="3.600"/><path d="M23.500 21.800l5.500 4.800" stroke="#f8c828" stroke-width="1.300"/><path d="M20.700 20.800l2 1.800" stroke="#d8dce4" stroke-width="3.800"/><circle cx="16.800" cy="16" r="6.300" fill="url(#gLens)" stroke="#8c909c" stroke-width="1.200"/></svg>
<svg class="a" style="left:241px;top:397px" width="32" height="32" viewBox="0 0 32 32"><path d="M9.500.5h13.500l6.500 6.500v18h-20z" fill="#d8d4f0" stroke="#7470b0"/><path d="M23 .5v6.500h6.500" fill="#f4f4ff" stroke="#7470b0"/><rect x="22" y="9" width="6" height="14" fill="#b4b0e0"/><path d="M2.500 4.500h13.500l6.500 6.500v18.500h-20z" fill="#fff" stroke="#6864a8"/><path d="M16 4.500v6.500h6.500" fill="#a8cce8" stroke="#6864a8"/><rect x="4" y="13" width="17" height="3" fill="#c4c0e8"/><rect x="4" y="17" width="17" height="11" fill="#b4b0e0"/></svg>
<svg width="0" height="0" style="position:absolute"><defs><radialGradient id="gPin" cx=".35" cy=".3" r=".8"><stop offset="0" stop-color="#fff"/><stop offset=".35" stop-color="#a8c8f0"/><stop offset="1" stop-color="#2c58b0"/></radialGradient></defs></svg>
<svg class="a" style="left:338px;top:397px" width="32" height="32" viewBox="0 0 32 32"><path d="M3.500 8.500l7.500-6 5.500 1" fill="none" stroke="#1c3c90" stroke-width="5"/><path d="M3.500 8.500l7.500-6 5.500 1" fill="none" stroke="#6c9ce0" stroke-width="3"/><path d="M0 4v7.500h7.500z" fill="#2450a8" stroke="#1c3c90" stroke-width=".8"/><path d="M25 22.500l-8.500 7-4-2.500" fill="none" stroke="#1c3c90" stroke-width="5"/><path d="M25 22.500l-8.500 7-4-2.500" fill="none" stroke="#6c9ce0" stroke-width="3"/><path d="M28.700 26.500v-7.500h-7.500z" fill="#7cacec" stroke="#1c3c90" stroke-width=".8"/><path d="M6.500 8l3-2.500h10l2.500 3v17h-15.500z" fill="#dce8fc" stroke="#a8b8e0" stroke-width=".8"/><path d="M8.500 9.500h7M8.500 12h5M8.500 14.500h8M8.500 17h10.500M8.500 19.500h10.500M8.500 22h10.500M12.500 24.200h6.500" stroke="#a4a0d8" stroke-width="1.100"/><path d="M14.700 12.800l7-3.500" stroke="#5c6c98" stroke-width="1.200"/><circle cx="22.800" cy="9" r="3.300" fill="#5888d0"/><circle cx="25.500" cy="3.500" r="4.600" fill="url(#gPin)"/></svg>
<svg class="a" style="left:435px;top:397px" width="32" height="32" viewBox="0 0 32 32"><path d="M4.500.5h14l8 8v21h-22z" fill="#fafaff" stroke="#5c5c94" stroke-width=".9"/><path d="M18.500.5v8h8z" fill="#a8ccf4" stroke="#5c78b8" stroke-width=".8"/><path d="M22 10h3.500v18h-3.500z" fill="#e4ecfc"/><path d="M23.5 16.1L23.5 18.5L21.3 18.9L20.6 20.5L21.9 22.3L20.2 24.0L18.4 22.7L16.8 23.4L16.4 25.6L14.0 25.6L13.6 23.4L12.0 22.7L10.2 24.0L8.5 22.3L9.8 20.5L9.1 18.9L6.9 18.5L6.9 16.1L9.1 15.7L9.8 14.1L8.5 12.3L10.2 10.6L12.0 11.9L13.6 11.2L14.0 9.0L16.4 9.0L16.8 11.2L18.4 11.9L20.2 10.6L21.9 12.3L20.6 14.1L21.3 15.7z" fill="#b4b4e2" stroke="#8c8ccc" stroke-width=".8"/><circle cx="15.200" cy="17.300" r="1.700" fill="#fff"/></svg>
<svg class="a" style="left:531px;top:397px" width="32" height="32" viewBox="0 0 32 32"><path d="M1.700 14.200L22.300 10 31 15 14 18.700z" fill="#e6e6f2"/><path d="M4.200 2L16 .2 21 10 9 13.500z" fill="#fafaff" stroke="#d0d0dc" stroke-width=".5"/><path d="M7 8.500L19 5.500 21 10 9 13.500z" fill="#b8d8f8"/><path d="M8 13.200l13.500-3.500 1.500 1-13.500 3.800z" fill="#8c8c9c"/><path d="M1.700 14.200L14 18.700V29.500L1.700 24.300z" fill="#f2f2fa" stroke="#c0c0cc" stroke-width=".5"/><path d="M1.700 19.200L14 23.700" stroke="#c8c8d4" stroke-width=".8"/><path d="M14 18.700L31 15V23L14 29.500z" fill="#a8a8b0"/><path d="M15.500 22.800L30 18.800M15.500 25.500L30 21.300" stroke="#484870" stroke-width="1.300"/><rect x="25" y="15" width="3.200" height="2" fill="#40c820" transform="rotate(-12 26.500 16)"/></svg>
<svg class="a" style="left:629px;top:397px" width="32" height="32" viewBox="0 0 32 32"><path d="M3.500 26.500L24.500 12.300" stroke="#ececf2" stroke-width="5" stroke-linecap="round"/><path d="M3 27.800L24.800 13" stroke="#a8a8b8" stroke-width="1"/><path d="M5.800 25L17 17.300" stroke="#101018" stroke-width="5"/><path d="M5 23.800L16.200 16.100" stroke="#7c74a8" stroke-width=".9"/><path d="M7.3 2.1L9.7 5.9L14.2 5.5L11.3 9.0L13.1 13.2L8.9 11.5L5.5 14.5L5.8 10.0L1.9 7.7L6.3 6.5z" fill="#f8c820" stroke="#d89010" stroke-width=".8"/><path d="M8.400 3.500l-1.500 8" stroke="#fce880" stroke-width="1.500"/><path d="M20.0 0.1L20.6 3.0L23.6 3.8L20.9 5.3L21.1 8.4L18.9 6.3L16.0 7.5L17.2 4.7L15.3 2.3L18.3 2.6z" fill="#f8c820" stroke="#d89010" stroke-width=".7"/><path d="M19.500 1.500l-.8 5" stroke="#fce880" stroke-width="1"/><path d="M27.8 7.2L28.1 9.6L30.4 10.4L28.2 11.5L28.2 13.9L26.5 12.1L24.2 12.8L25.3 10.7L24.0 8.7L26.3 9.1z" fill="#f8c820" stroke="#d89010" stroke-width=".6"/></svg>
<svg class="a" style="left:729px;top:400px" width="24" height="24" viewBox="0 0 24 24"><rect x=".5" y=".5" width="23" height="23" rx="3" fill="#e84810" stroke="#fff" stroke-width="1"/><path d="M1.500 4a3 3 0 0 1 3-2.500h15a3 3 0 0 1 3 2.500v6c-7 2-14 2-21 0z" fill="#f07040" opacity=".7"/><path d="M1.500 19h21v1.500a3 3 0 0 1-3 3h-15a3 3 0 0 1-3-3z" fill="#c03408" opacity=".6"/><circle cx="12" cy="11.500" r="5.800" fill="none" stroke="#fff" stroke-width="2"/><rect x="11" y="8" width="2" height="7" fill="#fff"/></svg>
<svg width="0" height="0" style="position:absolute"><defs><filter id="rough" x="-10%" y="-20%" width="120%" height="140%"><feTurbulence type="fractalNoise" baseFrequency="0.55" numOctaves="2" seed="7" result="n"/><feDisplacementMap in="SourceGraphic" in2="n" scale="5" xChannelSelector="R" yChannelSelector="G"/></filter></defs></svg>
<svg class="a" style="left:156px;top:270px" width="108" height="48" viewBox="0 0 108 48"><g fill="#000" transform="translate(-156,-270)" filter="url(#rough)"><path d="M169 284c0-4 3-6 7-6l4-1.500 5 .5 4-1 6 1 5-.5 6 2 6 1 8 1 10 .5 8 .5 5-1c4-.5 7 1.500 7 4.500 0 3-3 5-7 4.500l-6-.5-8 .5-10-.5-10 1-10 .5-10 1.500-8-.5-6 .5c-4 0-6-2.500-6-5.500z"/><path d="M164 298c0-3 3-5.500 6-5.500l6-1 8 1 7-1 8 2 6 1 10 0 12 .5 10 1 5 3c2 2 2 5.500 0 7l-5 1.500-8-.5-10 .5-12-1-10 .5-8-.5-2 4c-1 3-4 4.500-7 3.500-3-1-4.500-4-3.500-7l-8-2c-3-1-5-3-5-6.500z"/><ellipse cx="250" cy="286" rx="6" ry="4.500"/></g></svg>
<svg class="a" style="left:648px;top:490px" width="52" height="24" viewBox="0 0 52 24"><path transform="translate(4,3) scale(1.05,1.25)" filter="url(#rough)" d="M2.500 8c0-3 3-5 7-5l6-1.500 6 1 7-1 8 1.500c3 1 4 3 3.500 5.500-.5 2-3 3.500-6 3.500l-8 .5-8 .5-8-.5c-4 0-7.500-1.500-7.500-4.500z" fill="#000"/></svg>
<svg class="a" style="left:360px;top:370px" width="120" height="140" viewBox="0 0 120 140"><path d="M36 5h51v67.700h27.500L61.500 134 8.500 72.700H36z" fill="#ed4b0d"/></svg>
</div>
</body>
</html>
